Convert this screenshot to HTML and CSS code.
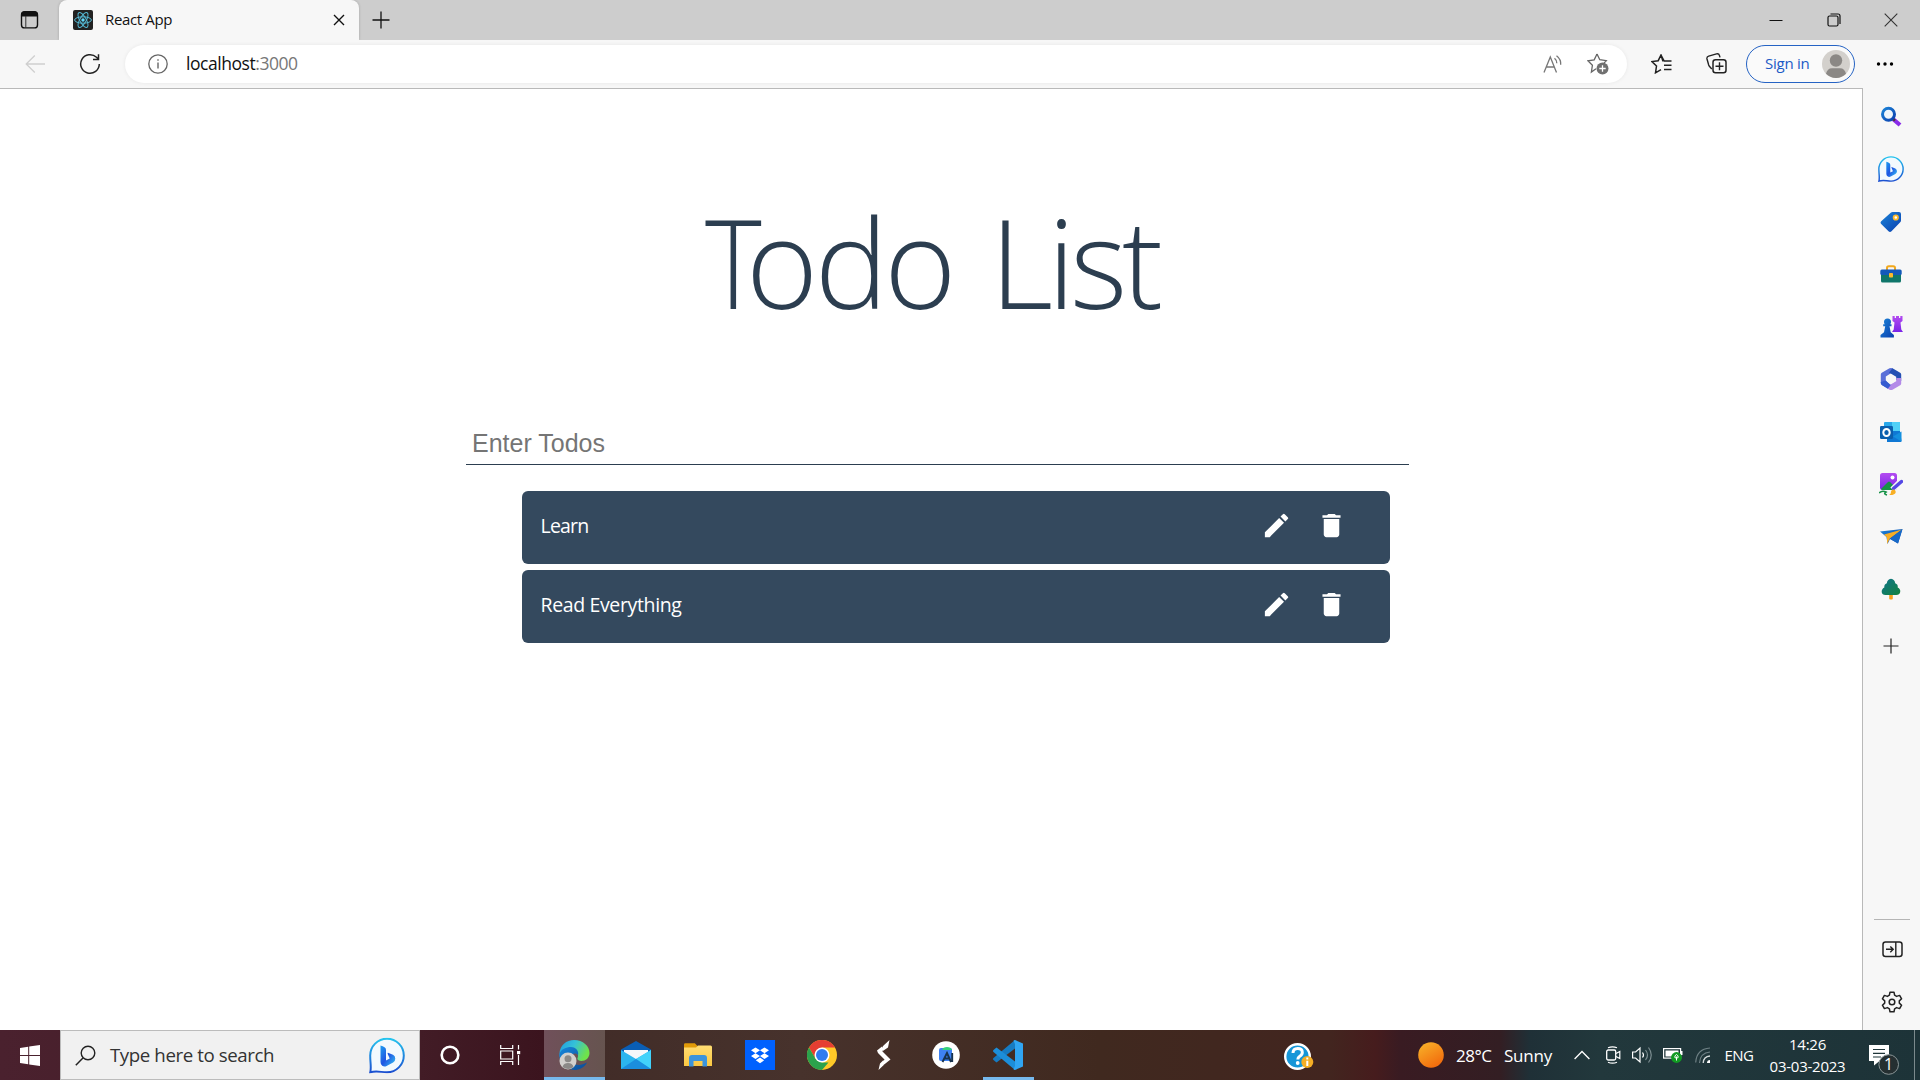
FILE: index.html
```html
<!DOCTYPE html>
<html lang="en">
<head>
<meta charset="utf-8">
<title>React App</title>
<link rel="stylesheet" href="styles.css">
</head>
<body>
<svg class="defs" aria-hidden="true">
  <defs>
    <linearGradient id="bingRing" x1="0" y1="0" x2="0" y2="1"><stop offset="0" stop-color="#25c4ee"/><stop offset="1" stop-color="#1b4fd0"/></linearGradient>
    <linearGradient id="bingB" x1="0" y1="0" x2="1" y2="1"><stop offset="0" stop-color="#1e9df0"/><stop offset=".5" stop-color="#1f55e2"/><stop offset="1" stop-color="#35c8f5"/></linearGradient>
    <linearGradient id="blue" x1="0" y1="0" x2="1" y2="1"><stop offset="0" stop-color="#1b84d8"/><stop offset="1" stop-color="#0b3fae"/></linearGradient>
    <linearGradient id="purple" x1="0" y1="0" x2="0" y2="1"><stop offset="0" stop-color="#b44cf0"/><stop offset="1" stop-color="#7a24e8"/></linearGradient>
    <linearGradient id="edgeTop" x1="0" y1="0" x2="1" y2=".4"><stop offset="0" stop-color="#1f9be0"/><stop offset=".5" stop-color="#35c1d8"/><stop offset="1" stop-color="#6fe24b"/></linearGradient>
    <linearGradient id="edgeLow" x1="0" y1="0" x2="1" y2="1"><stop offset="0" stop-color="#1687dc"/><stop offset="1" stop-color="#0b4a94"/></linearGradient>
    <linearGradient id="sun" x1="0" y1="0" x2=".6" y2="1"><stop offset="0" stop-color="#f8b62b"/><stop offset="1" stop-color="#f26c0d"/></linearGradient>
    <linearGradient id="folder" x1="0" y1="0" x2="0" y2="1"><stop offset="0" stop-color="#ffdd73"/><stop offset="1" stop-color="#fbc842"/></linearGradient>
    <linearGradient id="tree" x1="0" y1="0" x2="1" y2="1"><stop offset="0" stop-color="#10748b"/><stop offset="1" stop-color="#12833f"/></linearGradient>
    <symbol id="bing" viewBox="0 0 36 36">
      <path d="M1.300 34.700C2.500 30 1.200 25 1.200 18A16.800 16.800 0 1 1 18 34.800C12 34.800 8 33 1.300 34.700z" fill="#f3fafe" stroke="url(#bingRing)" stroke-width="2"/>
      <path d="M11.500 8q2.500.8 4 1.800 1.500.8 1.500 2.700v10.500l3.700-2-2-4.600q-.6-1.400.9-.9l4.400 1.700q2.300 1.200 2.300 4 0 2.500-2.200 3.700l-6.500 3.500q-2.300 1.100-4.400-.2-1.700-1.200-1.700-3.700z" fill="url(#bingB)"/>
    </symbol>
  </defs>
</svg>

<div class="screen">
  <header class="tabstrip">
    <div class="workspaces"><svg width="20" height="20" viewBox="0 0 20 20"><rect x="1.500" y="1.900" width="16" height="16" rx="3" fill="none" stroke="#111" stroke-width="1.400"/><path d="M1 6.500V5a4 4 0 0 1 4-4h9a4 4 0 0 1 4 4v1.500z" fill="#111"/><path d="M5.800 6v12" stroke="#333" stroke-width="1"/></svg></div>
    <div class="tab">
      <svg class="favicon" width="20" height="20" viewBox="0 0 20 20"><rect width="20" height="20" rx="2" fill="#222"/><g fill="none" stroke="#55b9d4" stroke-width="1"><ellipse cx="10" cy="10" rx="8.400" ry="3.200"/><ellipse cx="10" cy="10" rx="8.400" ry="3.200" transform="rotate(60 10 10)"/><ellipse cx="10" cy="10" rx="8.400" ry="3.200" transform="rotate(120 10 10)"/></g><circle cx="10" cy="10" r="1.700" fill="#61dafb"/></svg>
      <span class="tab-title">React App</span>
      <svg class="tab-close" width="12" height="12" viewBox="0 0 12 12"><path d="M1 1l10 10M11 1L1 11" stroke="#111" stroke-width="1.400"/></svg>
    </div>
    <svg class="newtab" width="18" height="18" viewBox="0 0 18 18"><path d="M9 .5v17M.5 9h17" stroke="#111" stroke-width="1.300"/></svg>
    <div class="window-buttons">
      <svg width="14" height="14" viewBox="0 0 14 14"><path d="M.5 7.500h13" stroke="#111"/></svg>
      <svg width="14" height="14" viewBox="0 0 14 14"><rect x="1" y="3" width="10" height="10" rx="1.500" fill="none" stroke="#111" stroke-width="1.200"/><path d="M3.500 1H11a2 2 0 0 1 2 2v8" fill="none" stroke="#111" stroke-width="1.200"/></svg>
      <svg width="14" height="14" viewBox="0 0 14 14"><path d="M.7.7l12.600 12.600M13.300.7L.7 13.300" stroke="#333" stroke-width="1.100"/></svg>
    </div>
  </header>

  <div class="toolbar">
    <svg class="back" width="20" height="18" viewBox="0 0 20 18"><path d="M20 9H1.200M9.800.5L1.200 9l8.600 8.500" fill="none" stroke="#cfcfcf" stroke-width="1.300"/></svg>
    <svg class="reload" width="22" height="22" viewBox="0 0 22 22"><path d="M20.300 11A9.300 9.300 0 1 1 17.500 4.300L19.300 6M19.500 1.200V6.500H14" fill="none" stroke="#222" stroke-width="1.500"/></svg>
    <div class="address">
      <svg width="20" height="20" viewBox="0 0 20 20"><circle cx="10" cy="10" r="9.200" fill="none" stroke="#666" stroke-width="1.300"/><path d="M10 8.500v6M10 5.200v1.600" stroke="#666" stroke-width="1.400"/></svg>
      <span class="url">localhost<span class="port">:3000</span></span>
      <svg class="read" width="20" height="18" viewBox="0 0 20 18"><path d="M1 17.500L7.300 2l6.200 15.500M3.200 12h8.200M11.500 3.200q2.600 2.200 2.300 5M13.500.7q4.700 3.600 4.200 9" fill="none" stroke="#777" stroke-width="1.300"/></svg>
      <svg class="star" width="22" height="22" viewBox="0 0 22 22"><path d="M10 1l2.800 5.700 6.500 1-2.500 2.700M9 15.800L4.400 19l1-6.700L.9 7.800l6.300-1L10 1" fill="none" stroke="#666" stroke-width="1.300"/><circle cx="15.500" cy="15.500" r="6" fill="#707070"/><path d="M15.500 12.300v6.400M12.300 15.500h6.400" stroke="#fff" stroke-width="1.300"/></svg>
    </div>
    <svg class="favorites" width="22" height="20" viewBox="0 0 22 20"><path d="M13.500 6.800h-1.700L10 1 7.200 6.700.9 7.600 5.500 12l-1 6.800 5.500-3.200M10 1l3 5.900M13 6.900h7.500M13 11.200h7.500M13 15.500h7.500" fill="none" stroke="#222" stroke-width="1.500"/></svg>
    <svg class="collections" width="22" height="21" viewBox="0 0 22 21"><path d="M5.800 16L3.600 13.500Q3 12.800 2.700 12L1 6Q.5 3.800 2.700 3.100L10.500.9q2.400-.5 3 1.700l.5 1.800" fill="none" stroke="#222" stroke-width="1.400"/><rect x="7" y="6.700" width="13" height="13" rx="2.500" fill="none" stroke="#222" stroke-width="1.500"/><path d="M13.500 9.200v8M9.500 13.200h8" stroke="#222" stroke-width="1.400"/></svg>
    <div class="signin"><span class="signin-label">Sign in</span><svg width="28" height="28" viewBox="0 0 28 28"><circle cx="14" cy="14" r="14" fill="#d3d0cc"/><circle cx="14" cy="10.500" r="6.200" fill="#8b8885"/><path d="M4 23.800Q5.200 18.200 10 18.200h8q4.800 0 6 5.600A14 14 0 0 1 4 23.800z" fill="#8b8885"/></svg></div>
    <svg class="more" width="18" height="6" viewBox="0 0 18 6"><circle cx="2.500" cy="3" r="1.700"/><circle cx="9" cy="3" r="1.700"/><circle cx="15.500" cy="3" r="1.700"/></svg>
  </div>

  <div class="viewport">
    <main class="page">
      <h1 class="heading"><span class="cap">T</span>odo <span class="tight">List</span></h1>
      <input class="todo-input" type="text" placeholder="Enter Todos">
      <ul class="todos">
        <li class="todo"><span class="todo-text short">Learn</span>
          <svg class="act" viewBox="0 0 24 24"><path d="M3 17.250V21h3.750L17.810 9.940l-3.750-3.750L3 17.250zM20.710 7.040a.996.996 0 0 0 0-1.410l-2.340-2.340a.996.996 0 0 0-1.410 0l-1.830 1.830 3.750 3.750 1.830-1.830z"/></svg>
          <svg class="act" viewBox="0 0 24 24"><path d="M6 19c0 1.100.9 2 2 2h8c1.100 0 2-.9 2-2V7H6v12zM19 4h-3.500l-1-1h-5l-1 1H5v2h14V4z"/></svg></li>
        <li class="todo"><span class="todo-text">Read Everything</span>
          <svg class="act" viewBox="0 0 24 24"><path d="M3 17.250V21h3.750L17.810 9.940l-3.750-3.750L3 17.250zM20.710 7.040a.996.996 0 0 0 0-1.410l-2.340-2.340a.996.996 0 0 0-1.410 0l-1.830 1.830 3.750 3.750 1.830-1.830z"/></svg>
          <svg class="act" viewBox="0 0 24 24"><path d="M6 19c0 1.100.9 2 2 2h8c1.100 0 2-.9 2-2V7H6v12zM19 4h-3.500l-1-1h-5l-1 1H5v2h14V4z"/></svg></li>
      </ul>
    </main>
    <aside class="sidebar">
      <div class="slot"><svg width="22" height="22" viewBox="0 0 22 22"><path d="M13 13l7 6" stroke="#8a2be8" stroke-width="4.200"/><path d="M12 12l3 2.600" stroke="#4a3a30" stroke-width="2.500"/><circle cx="8.500" cy="8.200" r="6" fill="#eef6fc" stroke="url(#blue)" stroke-width="3"/></svg></div>
      <div class="slot"><svg width="26" height="26"><use href="#bing"/></svg></div>
      <div class="slot"><svg width="22" height="22" viewBox="0 0 22 22"><path d="M12.500 1H19q2 0 2 2v6.500q0 1-.8 1.800l-8.700 9q-1.500 1.500-3 0L1.200 13q-1.300-1.400 0-2.800L11 1.600q.7-.6 1.500-.6z" fill="url(#blue)"/><circle cx="15.800" cy="6.500" r="2.200" fill="#fff" stroke="#fbb92b" stroke-width="1.800"/></svg></div>
      <div class="slot"><svg width="22" height="18" viewBox="0 0 22 18"><path d="M7 5V3q0-1.800 1.800-1.800h4.400Q15 1.200 15 3v2" fill="none" stroke="#f2a81d" stroke-width="2"/><rect x="1" y="8" width="20" height="9.500" rx="1.500" fill="#10766a"/><rect x=".3" y="4.500" width="21.400" height="5.500" rx="1.500" fill="#1459b9"/><rect x="9" y="8" width="4" height="4.500" rx=".8" fill="#fbb92b"/></svg></div>
      <div class="slot"><svg width="23" height="23" viewBox="0 0 23 23"><path d="M12.500 1h2.200v2H16V1h3v2h1.300V1h2.200v5l-2 1.500.8 7 1.700 2.500h-11l1.700-2.500.8-7-2-1.500z" fill="url(#purple)"/><path d="M4 7a3.500 3.500 0 1 1 7 0q0 1.200-.8 2.200h1.300v2h-2l1.200 6 3.200 2.800V22.500H.5V20L4 17.200l1.200-6h-2v-2h1.600Q4 8.200 4 7z" fill="url(#blue)"/></svg></div>
      <div class="slot"><svg width="22" height="24" viewBox="0 0 22 24"><path d="M9.500 1.300L1.800 5.800Q.8 6.400.8 7.600V16q0 1.300 1 1.900l4 2.300V9.500L13 5V1.500Q11.300.4 9.500 1.300z" fill="#5a6fd8"/><path d="M12.500 1.300l7.700 4.500q1 .6 1 1.800V14l-5-1V9.800L9 5.500z" fill="#2450b4"/><path d="M21.200 11v5.500q0 1-1 1.700l-7.700 4.500q-1.500.8-3 0l-4-2.500 10.700-6V11z" fill="#b38ae8"/><path d="M.8 15l5-1.500 5 4.500-3 3.700-6-3.800q-1-.6-1-1.900z" fill="#365bd0"/><path d="M11 7.700l4 2.300v4.600l-4 2.300-4-2.300V10z" fill="#f7f7f7"/></svg></div>
      <div class="slot"><svg width="22" height="22" viewBox="0 0 22 22"><rect x="4" y="1" width="16" height="10" rx="1" fill="#28a8ea"/><path d="M12 1h7q1 0 1 1v9h-8z" fill="#50d0f7"/><path d="M7 10h13l1.500 10q0 1-1 1H7z" fill="#0f78d4"/><path d="M21.500 10.500v10L13 15.500z" fill="#1490df"/><rect x="0" y="5" width="13" height="13" rx="1.200" fill="#0a5fae"/><ellipse cx="6.500" cy="11.500" rx="3.200" ry="3.600" fill="none" stroke="#fff" stroke-width="2"/></svg></div>
      <div class="slot"><svg width="24" height="24" viewBox="0 0 24 24"><rect x="1" y="1" width="17" height="17" rx="2.500" fill="url(#purple)"/><path d="M2 17l7-7q1-1 2 0l6 6v2H3z" fill="#159248"/><circle cx="13.500" cy="5.500" r="2" fill="#fff"/><path d="M13.500 17.500L22 9" stroke="#f7f7f7" stroke-width="6"/><path d="M14.500 16.500L22.500 9.500" stroke="#5347e5" stroke-width="3.500" stroke-linecap="round"/><path d="M10 22.500q2 .2 2-3 1-3 4-1.500 2 3-1.500 4.500-2.500 1-4.500 0z" fill="#f8af25"/><path d="M0 21q3-3 7-1-3 2 1 3" fill="none" stroke="#189348" stroke-width="1.600"/></svg></div>
      <div class="slot"><svg width="23" height="18" viewBox="0 0 23 18"><path d="M0 3.500L22.500 1 18 15.500 10 11 7.500 16 6.500 9z" fill="url(#blue)"/><path d="M4 6.500L22 1.500 9.800 10.500 7 16V9.500z" fill="#f6ae26"/><path d="M22.500 1L10 10.800l8 4.700z" fill="#1769c7"/></svg></div>
      <div class="slot"><svg width="20" height="22" viewBox="0 0 20 22"><rect x="8.200" y="15" width="3.600" height="6.500" rx="1" fill="#f5a11e"/><path d="M10 .8q3.800.5 4.200 4.500 3 1 2.500 4.200 3 1.500 2.500 4.500-.5 3-4 3H4.500Q1 17 .7 14q-.2-3 2.600-4.500Q3 6.300 5.800 5.300 6.200 1.300 10 .8z" fill="url(#tree)"/></svg></div>
      <div class="slot add"><svg width="16" height="16" viewBox="0 0 16 16"><path d="M8 .5v15M.5 8h15" stroke="#222" stroke-width="1.200"/></svg></div>
      <div class="sidebar-bottom">
        <div class="slot"><svg width="21" height="17" viewBox="0 0 21 17"><rect x="1" y="1" width="19" height="14.500" rx="2.500" fill="none" stroke="#222" stroke-width="1.500"/><path d="M13.800 1v15M4 8.300h7M8.300 5.400l2.900 2.900-2.900 2.900" fill="none" stroke="#222" stroke-width="1.400"/></svg></div>
        <div class="slot"><svg width="22" height="22" viewBox="0 0 22 22"><path d="M9 1.200h4l.6 3 2 1.200 3-1 2 3.400-2.300 2.100v2.200l2.300 2.100-2 3.400-3-1-2 1.200-.6 3H9l-.6-3-2-1.200-3 1-2-3.400 2.300-2.100V9.900L1.400 7.800l2-3.400 3 1 2-1.200z" fill="none" stroke="#222" stroke-width="1.500" stroke-linejoin="round"/><circle cx="11" cy="11" r="2.800" fill="none" stroke="#222" stroke-width="1.500"/></svg></div>
      </div>
    </aside>
  </div>

  <footer class="taskbar">
    <div class="start"><svg width="20" height="21" viewBox="0 0 20 21"><path d="M0 3l8.200-1.200V10H0zM9.200 1.600L20 0v10H9.200zM0 11h8.200v8.200L0 18zM9.200 11H20v10L9.200 19.400z" fill="#fff"/></svg></div>
    <div class="search">
      <svg width="21" height="21" viewBox="0 0 21 21"><circle cx="13" cy="8" r="6.800" fill="none" stroke="#222" stroke-width="1.400"/><path d="M8.200 12.800L.8 20.200" stroke="#222" stroke-width="1.500"/></svg>
      <span class="search-text">Type here to search</span>
      <svg width="36" height="37" viewBox="0 0 36 36"><use href="#bing"/></svg>
    </div>
    <div class="cell"><svg width="20" height="20" viewBox="0 0 20 20"><circle cx="10" cy="10" r="8.300" fill="none" stroke="#fff" stroke-width="2.600"/></svg></div>
    <div class="cell task-view"><svg width="21" height="20" viewBox="0 0 21 20"><path d="M.7 0v3.500h12V0M.7 20v-3.500h12V20M.7 6h12v8H.7zM18.500 0v4.500M18.500 10v10" fill="none" stroke="#fff" stroke-width="1.200"/><rect x="17" y="6" width="3.200" height="3.200" fill="#fff"/></svg></div>
    <div class="apps">
      <div class="app active"><svg width="31" height="30" viewBox="0 0 31 30"><path d="M15 0C24 0 30.500 6 30.500 13c0 5-4 8-8 8-3 0-4.500-1.500-4-3 2-4-1.500-8-7-8-5 0-9 3-10.800 7C-.8 6 7 0 15 0z" fill="url(#edgeTop)"/><path d="M.5 14C2 9 7 7 12 7c5 0 8 4 7 8-3-3-7-1-7 4 0 4 6 9 16 3.500C25 28 20 30 15.500 30 7 30-.5 23 .5 14z" fill="url(#edgeLow)"/><circle cx="9" cy="21" r="8.500" fill="#d2d0cd"/><circle cx="9" cy="18.800" r="3.500" fill="#8b8987"/><path d="M3.500 27q1-4 5.500-4t5.500 4q-5 4-11 0z" fill="#8b8987"/></svg></div>
      <div class="app"><svg width="30" height="28" viewBox="0 0 30 28"><path d="M0 8.500L15 0l15 8.500V15H0z" fill="#0a5eb5"/><path d="M3 9h24v9H3z" fill="#f5f7fa"/><path d="M0 9l15 9L30 9v19H0z" fill="#2bb5ee"/><path d="M30 9v19L15 18z" fill="#42d2fa"/><path d="M0 28l15-10 15 10z" fill="#1b8ede"/></svg></div>
      <div class="app"><svg width="28" height="24" viewBox="0 0 28 24"><path d="M0 1.500Q0 .3 1.200.3h9.600L13.500 3v5H0z" fill="#e09a08"/><path d="M0 4.500h12l2-2h12.500q1.500 0 1.500 1.500v19H0z" fill="url(#folder)"/><path d="M5 23.500V15q0-3 3-3h12q3 0 3 3v8.500h-4.500V18h-9v5.500z" fill="#3b94dc"/></svg></div>
      <div class="app"><svg width="30" height="30" viewBox="0 0 30 30"><rect width="30" height="30" fill="#0061fe"/><path d="M10.500 7.500L15 10.300l-4.500 2.900L6 10.300zM19.500 7.500l4.500 2.800-4.500 2.900-4.500-2.900zM10.500 13.200l4.500 2.900-4.500 2.900L6 16.100zM19.500 13.200l4.500 2.900-4.500 2.900-4.500-2.900zM15 17.600l4.200 2.700-4.200 2.900-4.200-2.900z" fill="#fff"/></svg></div>
      <div class="app"><svg width="30" height="30" viewBox="0 0 30 30"><circle cx="15" cy="15" r="15" fill="#ffc928"/><path d="M2 7.500A15 15 0 0 1 28 7.500H15L8.500 18.700z" fill="#e63e32"/><path d="M2 7.500L8.500 18.700 15 22.500h6.500L15 30A15 15 0 0 1 2 7.500z" fill="#2ba24c"/><circle cx="15" cy="15" r="7.500" fill="#fff"/><circle cx="15" cy="15" r="6" fill="#2f7cf0"/></svg></div>
      <div class="app"><svg width="14" height="30" viewBox="0 0 14 30"><path d="M12.500 0L11 7.500 5.800 11 4.800 8.500 6 6zM0 10.500l5-4L5.500 11.500l8 8L6.500 25l-.5-3 1.500-2.500L1 13zM1.500 30L3 23.500l3.500-3.500.3 5z" fill="#fff"/></svg></div>
      <div class="app"><svg width="28" height="28" viewBox="0 0 28 28"><circle cx="14" cy="14" r="13.800" fill="#fff"/><rect x="7" y="7" width="13" height="13" rx="2" fill="#3e82f3"/><path d="M10 9q1-3 5-3t5 3z" fill="#35d27c"/><path d="M10.500 21l4.500-9 4 9M12.500 17.500h5M20.200 12v9" fill="none" stroke="#17324d" stroke-width="1.900"/></svg></div>
      <div class="app running"><svg width="30" height="30" viewBox="0 0 30 30"><path d="M22 0v8.500L3.500 22.500.5 20q-1-1 0-2z" fill="#167bc2"/><path d="M22 30v-8.500L3.500 7.500.5 10q-1 1 0 2z" fill="#1c8ed9"/><path d="M22 0l8 3.500v23L22 30q-1 0-1.500-.8L22 26V4L20.500.8Q21 0 22 0z" fill="#30a5f2"/></svg></div>
    </div>
    <svg class="help" width="30" height="27" viewBox="0 0 30 27"><circle cx="13.500" cy="13.500" r="12.300" fill="#1696d8" stroke="#fff" stroke-width="2.400"/><path d="M9 10q0-4.500 4.700-4.500t4.600 4q0 2.300-2.500 3.700-2 1.300-2 3.300" fill="none" stroke="#fff" stroke-width="3"/><circle cx="13.700" cy="20" r="1.900" fill="#fff"/><circle cx="23.300" cy="19" r="6" fill="#f5ae25"/><path d="M23.300 17.700v5.300M23.300 14.500v2" stroke="#fff" stroke-width="2"/></svg>
    <div class="weather"><svg width="26" height="26" viewBox="0 0 26 26"><circle cx="13" cy="13" r="12.800" fill="url(#sun)"/></svg><span class="temp">28°C</span><span class="sky">Sunny</span></div>
    <div class="tray">
      <svg width="16" height="10" viewBox="0 0 16 10"><path d="M.6 9L8 1.500 15.400 9" fill="none" stroke="#fff" stroke-width="1.300"/></svg>
      <svg class="cam" width="15" height="18" viewBox="0 0 15 18"><rect x=".7" y="4" width="9" height="10" rx="1.500" fill="none" stroke="#fff" stroke-width="1.300"/><path d="M10 7.500l3.800-2v7L10 10.500M2 1.800Q6.500-.2 11 1.800M2 16.200q4.500 2 9 0" fill="none" stroke="#fff" stroke-width="1.200"/></svg>
      <svg class="vol" width="20" height="18" viewBox="0 0 20 18"><path d="M.6 6h3L8 2v14l-4.400-4h-3z" fill="none" stroke="#fff" stroke-width="1.200"/><path d="M10.500 6.500q2 2.500 0 5" fill="none" stroke="#fff" stroke-width="1.200"/><path d="M13.500 4q4 5 0 10M16.500 1.500q5.500 7.500 0 15" fill="none" stroke="#7c8d90" stroke-width="1.200"/></svg>
      <svg class="bat" width="20" height="16" viewBox="0 0 20 16"><rect x=".6" y="1.600" width="17" height="9.500" fill="none" stroke="#fff" stroke-width="1.200"/><path d="M2.500 3.500h13v6h-13zM18 4h1.500v4H18z" fill="#fff"/><circle cx="13.500" cy="10.500" r="5.400" fill="#119a22"/><path d="M13.500 13.500V9.500M11.800 10.500Q11.500 8.500 13.500 7.500q2 1 1.700 3-1.700 1.500-3.400 0z" fill="none" stroke="#fff" stroke-width="1"/></svg>
      <svg class="wifi" width="16" height="17" viewBox="0 0 16 17"><path d="M.7 15.500Q1.500 2 15 1M4.500 16Q5 6 15 5" fill="none" stroke="#6f8185" stroke-width="1.200"/><path d="M8.200 16Q8.500 9.500 15 9" fill="none" stroke="#d5dbdc" stroke-width="1.300"/><path d="M12 16q0-3 3-3v3z" fill="#fff"/></svg>
      <span class="lang">ENG</span>
      <div class="clock"><span class="time">14:26</span><span class="date">03-03-2023</span></div>
      <div class="notes"><svg width="30" height="30" viewBox="0 0 30 30"><path d="M0 0h20v16H10.500L5 20.500V16H0z" fill="#fff"/><path d="M4 4.500h12M4 8.300h12M4 12h8" stroke="#20363a" stroke-width="1.200"/><circle cx="19.700" cy="19.500" r="9.800" fill="#252f31" stroke="#8b9698"/></svg><span class="badge">1</span></div>
      <div class="peek"></div>
    </div>
  </footer>
</div>
</body>
</html>
```
FILE: styles.css
```css
* { box-sizing: border-box; }
body { margin: 0; background: #fff; font-family: "Open Sans", "Noto Sans", sans-serif; color: #111; overflow: hidden; }
svg { display: block; flex: none; }
span { white-space: nowrap; }
.defs { position: absolute; width: 0; height: 0; }
.screen { width: 1920px; height: 1080px; display: grid; grid-template-rows: 40px 48px 942px 50px; }

/* tab strip */
.tabstrip { display: flex; align-items: center; background: #cdcdcd; }
.workspaces { width: 59px; padding-left: 20px; }
.tab { width: 300px; height: 40px; padding: 0 14px; display: flex; align-items: center; background: #f7f7f7; border-radius: 8px 8px 0 0; box-shadow: 0 0 3px #0003; }
.tab-title { flex: 1; margin-left: 12px; padding-bottom: 2px; font-size: 15px; letter-spacing: -.35px; }
.newtab { margin-left: 13px; }
.window-buttons { display: flex; gap: 43.500px; margin-left: auto; padding-right: 22px; }

/* toolbar */
.toolbar { display: flex; align-items: center; padding-bottom: 1px; background: #f7f7f7; }
.back { margin-left: 25px; }
.reload { margin-left: 34px; }
.address { width: 1502px; height: 38px; margin-left: 23.500px; padding: 0 18px 0 23px; display: flex; align-items: center; background: #fff; border-radius: 19px; box-shadow: 0 0 4px #0001; }
.url { flex: 1; margin-left: 18.500px; padding-bottom: 1px; font-size: 17.500px; letter-spacing: -.45px; }
.port { color: #777; }
.star { margin-left: 24px; }
.favorites { margin-left: 24px; }
.collections { margin-left: 33px; }
.signin { width: 109px; height: 38px; margin-left: 18.500px; padding: 0 4px 0 18px; display: flex; align-items: center; justify-content: space-between; border: 1.500px solid #2563c4; border-radius: 19px; background: #fafafa; color: #1c5ac6; }
.signin-label { padding-bottom: 1px; font-size: 15px; letter-spacing: -.25px; }
.more { margin-left: 21px; }

/* page and sidebar */
.viewport { display: grid; grid-template-columns: 1863px 57px; background: #f7f7f7; }
.page { border-top: 1px solid #b9b9b9; border-right: 1px solid #b9b9b9; background: #fff; padding: 93px 453px 0 466px; }
.heading { margin: 0; height: 160px; padding-left: 239px; line-height: 160px; font-size: 123px; font-weight: 300; letter-spacing: -3.500px; word-spacing: 8.500px; color: #2c3e50; white-space: nowrap; }
.cap { display: inline-block; margin-right: -5.500px; letter-spacing: -18px; transform: scaleX(.88); transform-origin: 0 50%; }
.tight { letter-spacing: -5.400px; }
.todo-input { display: block; width: 943px; height: 43px; margin-top: 80px; padding: 1px 0 0 6px; border: 0; border-bottom: 1px solid #2c3e50; outline: 0; background: none; font: 25px "Liberation Sans", sans-serif; }
.todo-input::placeholder { color: #757575; }
.todos { list-style: none; margin: 26px 19px 0 56px; padding: 0; display: grid; gap: 6px; }
.todo { height: 73px; padding: 0 43px 5px 18.500px; display: flex; align-items: center; border-radius: 6px; background: #34495e; color: #fff; }
.todo-text { flex: 1; font-size: 19.500px; letter-spacing: -.36px; }
.short { letter-spacing: -.8px; }
.act { width: 31px; height: 31px; fill: #fff; }
.act + .act { margin-left: 24px; }

.sidebar { display: flex; flex-direction: column; padding: 2.500px 1px 0 0; }
.slot { height: 52.500px; display: grid; place-items: center; }
.slot.add { height: 60px; }
.sidebar-bottom { margin: auto 9px 2px 11px; padding-top: 3.500px; border-top: 1px solid #b5b5b5; }

/* taskbar */
.taskbar { display: flex; align-items: center; color: #fff; background: linear-gradient(90deg, #4a212e 0, #421c26 420px, #3b141e 543px, #402b27 545px, #47322c 800px, #40291f 1100px, #42251f 1330px, #461c1d 1375px, #391b22 1400px, #331e23 1500px, #1f3037 1530px, #22383c 1600px, #1d3338 1920px); }
.start { width: 60px; display: grid; place-items: center; }
.search { width: 360px; height: 50px; padding: 0 14px; display: flex; align-items: center; background: #f1f1f1; border: 1px solid #bcbcbc; color: #333; }
.search-text { flex: 1; margin-left: 14px; padding-bottom: 2px; font-size: 18.700px; letter-spacing: -.42px; }
.cell { width: 60px; display: grid; place-items: center; }
.task-view { width: 63px; padding-right: 2px; }
.apps { display: grid; grid-template-columns: repeat(8, 62px); height: 50px; }
.app { display: grid; place-items: center; }
.active { border-left: 1px solid #3b141e; background: linear-gradient(#0000 47px, #76b9ed 47px), linear-gradient(90deg, #70505a, #66544f); }
.running { background: linear-gradient(#76b9ed, #76b9ed) 6px 100% / 51px 3px no-repeat; }
.help { margin: 3px 0 0 245px; }
.weather { display: flex; align-items: center; margin-left: 104px; font-size: 17px; }
.temp { width: 48px; margin-left: 12px; letter-spacing: -.5px; }
.sky { width: 50px; letter-spacing: -.2px; }
.tray { display: flex; align-items: center; flex: 1; height: 50px; margin-left: 20px; }
.cam { margin-left: 16px; }
.vol { margin-left: 11px; }
.bat { margin-left: 11px; }
.wifi { margin-left: 12px; }
.lang { width: 30px; margin-left: 13.500px; font-size: 15px; letter-spacing: -.6px; }
.clock { width: 80px; margin-left: 13px; display: grid; grid-template-rows: 22px 23px; align-items: center; justify-items: center; font-size: 15px; letter-spacing: -.25px; }
.notes { position: relative; width: 30px; margin: 10px 0 0 21.500px; }
.badge { position: absolute; left: 15px; top: 8px; font-size: 16px; line-height: 23px; }
.peek { width: 1px; height: 50px; margin-left: 15px; background: #7b898c; }
```
